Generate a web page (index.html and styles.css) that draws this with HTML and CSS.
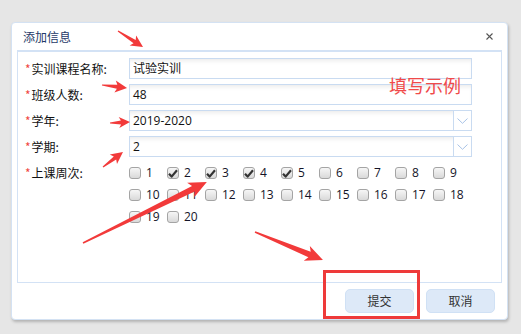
FILE: index.html
```html
<!DOCTYPE html>
<html lang="zh-CN">
<head>
<meta charset="utf-8">
<title>添加信息</title>
<link rel="stylesheet" href="styles.css">
</head>
<body>
<div class="stage">
  <div class="dialog">
    <div class="head">
      <span class="title">添加信息</span>
      <svg class="close" width="7" height="7" viewBox="0 0 7 7"><path d="M0.5 0.5L6.5 6.5M6.5 0.5L0.5 6.5" stroke="#555" stroke-width="1.1"/></svg>
    </div>
    <div class="panel">
      <div class="form">
        <div class="label"><span class="req">*</span>实训课程名称:</div>
        <div class="input"><span class="val">试验实训</span></div>
        <div class="label"><span class="req">*</span>班级人数:</div>
        <div class="input"><span class="val">48</span></div>
        <div class="label"><span class="req">*</span>学年:</div>
        <div class="input select"><span class="val">2019-2020</span><span class="drop"><svg width="11" height="6" viewBox="0 0 11 6"><path d="M0.5 0.5L5.5 5.3L10.5 0.5" fill="none" stroke="#a8c3e6" stroke-width="1"/></svg></span></div>
        <div class="label"><span class="req">*</span>学期:</div>
        <div class="input select"><span class="val">2</span><span class="drop"><svg width="11" height="6" viewBox="0 0 11 6"><path d="M0.5 0.5L5.5 5.3L10.5 0.5" fill="none" stroke="#a8c3e6" stroke-width="1"/></svg></span></div>
        <div class="label top"><span class="req">*</span>上课周次:</div>
        <div class="weeks">
          <label class="wk"><span class="cb"></span><span class="num">1</span></label>
          <label class="wk"><span class="cb"><svg class="tick" width="10" height="9" viewBox="0 0 10 9"><path d="M1 4.8L3.6 7.6L9 1.2" fill="none" stroke="#333" stroke-width="2.2" stroke-linejoin="round"/></svg></span><span class="num">2</span></label>
          <label class="wk"><span class="cb"><svg class="tick" width="10" height="9" viewBox="0 0 10 9"><path d="M1 4.8L3.6 7.6L9 1.2" fill="none" stroke="#333" stroke-width="2.2" stroke-linejoin="round"/></svg></span><span class="num">3</span></label>
          <label class="wk"><span class="cb"><svg class="tick" width="10" height="9" viewBox="0 0 10 9"><path d="M1 4.8L3.6 7.6L9 1.2" fill="none" stroke="#333" stroke-width="2.2" stroke-linejoin="round"/></svg></span><span class="num">4</span></label>
          <label class="wk"><span class="cb"><svg class="tick" width="10" height="9" viewBox="0 0 10 9"><path d="M1 4.8L3.6 7.6L9 1.2" fill="none" stroke="#333" stroke-width="2.2" stroke-linejoin="round"/></svg></span><span class="num">5</span></label>
          <label class="wk"><span class="cb"></span><span class="num">6</span></label>
          <label class="wk"><span class="cb"></span><span class="num">7</span></label>
          <label class="wk"><span class="cb"></span><span class="num">8</span></label>
          <label class="wk"><span class="cb"></span><span class="num">9</span></label>
          <label class="wk"><span class="cb"></span><span class="num">10</span></label>
          <label class="wk"><span class="cb"></span><span class="num">11</span></label>
          <label class="wk"><span class="cb"></span><span class="num">12</span></label>
          <label class="wk"><span class="cb"></span><span class="num">13</span></label>
          <label class="wk"><span class="cb"></span><span class="num">14</span></label>
          <label class="wk"><span class="cb"></span><span class="num">15</span></label>
          <label class="wk"><span class="cb"></span><span class="num">16</span></label>
          <label class="wk"><span class="cb"></span><span class="num">17</span></label>
          <label class="wk"><span class="cb"></span><span class="num">18</span></label>
          <label class="wk"><span class="cb"></span><span class="num">19</span></label>
          <label class="wk"><span class="cb"></span><span class="num">20</span></label>
        </div>
      </div>
    </div>
    <div class="foot">
      <button class="btn">提交</button>
      <button class="btn">取消</button>
    </div>
  </div>

  <div class="note">填写示例</div>
  <div class="mark"></div>

  <svg class="arrows" width="521" height="334" viewBox="0 0 521 334">
    <g fill="#f23a3a">
      <polygon transform="translate(118 31) rotate(32.6)" points="0,-0.6 19.7,-2 17.7,-6 29.7,0 17.7,6 19.7,2 0,0.6"/>
      <polygon transform="translate(102 85) rotate(6.8)" points="0,-0.6 15.2,-2 13.2,-6 25.2,0 13.2,6 15.2,2 0,0.6"/>
      <polygon transform="translate(110 123) rotate(-2.9)" points="0,-0.6 11,-2 9,-5.5 20,0 9,5.5 11,2 0,0.6"/>
      <polygon transform="translate(103 167) rotate(-36.9)" points="0,-0.6 15,-2 13,-6 25,0 13,6 15,2 0,0.6"/>
      <polygon transform="translate(83 243) rotate(-26.2)" points="0,-0.8 123,-3 120,-8 138,0 120,8 123,3 0,0.8"/>
      <polygon transform="translate(255 232) rotate(22.4)" points="0,-0.8 59,-3 56,-8 73.5,0 56,8 59,3 0,0.8"/>
    </g>
  </svg>
</div>
</body>
</html>
```

FILE: styles.css
```css
html, body {
  margin: 0;
  padding: 0;
  background: #e6e6e6;
}

body {
  width: 521px;
  height: 334px;
  overflow: hidden;
  font-family: "Open Sans", "Noto Sans CJK SC", sans-serif;
  font-size: 12px;
  color: #111;
}

.stage {
  position: relative;
  width: 521px;
  height: 334px;
  padding: 22px 0 0 11px;
  box-sizing: border-box;
}

.dialog {
  width: 497px;
  height: 298px;
  box-sizing: border-box;
  background: #fff;
  border: 1px solid #d4e2f3;
  border-radius: 4px;
  box-shadow: 1px 2px 3px rgba(0, 0, 0, 0.22);
  display: flex;
  flex-direction: column;
}

.head {
  height: 27px;
  display: flex;
  align-items: center;
  justify-content: space-between;
  padding: 0 14px 0 11px;
}

.title {
  font-family: "Noto Sans CJK SC", sans-serif;
  font-size: 12px;
  line-height: 16px;
  color: #1f3a68;
}

.close {
  display: block;
}

.panel {
  margin: 0 5px;
  height: 233px;
  box-sizing: border-box;
  border: 1px solid #d3e2f5;
  border-top-width: 2px;
  padding: 6px 0 0 7px;
}

.form {
  display: grid;
  grid-template-columns: 104px 343px;
  grid-auto-rows: 21px;
  row-gap: 5px;
}

.label {
  font-family: "Noto Sans CJK SC", sans-serif;
  font-size: 12px;
  line-height: 21px;
  color: #111;
}

.label.top {
  line-height: 22px;
}

.req {
  color: #f0473f;
  margin-right: 1px;
}

.input {
  box-sizing: border-box;
  height: 21px;
  border: 1px solid #c9dbf1;
  background: #fff;
  box-shadow: inset 0 4px 4px -2px rgba(0, 0, 0, 0.08);
  display: flex;
  align-items: center;
}

.val {
  flex: 1;
  padding-left: 3px;
  font-size: 12px;
  line-height: 19px;
  color: #111;
}

.drop {
  width: 17px;
  height: 19px;
  border-left: 1px solid #c9dbf1;
  display: flex;
  align-items: center;
  justify-content: center;
  background: #fff;
}

.weeks {
  display: grid;
  grid-template-columns: repeat(9, 38px);
  grid-auto-rows: 22px;
}

.wk {
  display: flex;
  align-items: center;
  gap: 5px;
}

.cb {
  width: 12px;
  height: 12px;
  box-sizing: border-box;
  border: 1px solid #a4a4a4;
  border-radius: 3px;
  background: linear-gradient(#f6f6f6, #d9d9d9);
  display: flex;
  align-items: center;
  justify-content: center;
}

.tick {
  display: block;
}

.num {
  font-family: "Open Sans", sans-serif;
  font-size: 12px;
  line-height: 22px;
  color: #141428;
}

.foot {
  flex: 1;
  display: flex;
  justify-content: flex-end;
  align-items: flex-start;
  gap: 12px;
  padding: 6px 12px 0 0;
}

.btn {
  width: 69px;
  height: 24px;
  box-sizing: border-box;
  border: 1px solid #d0e1f5;
  border-radius: 5px;
  background: #dde9f8;
  font-family: "Noto Sans CJK SC", sans-serif;
  font-size: 12px;
  line-height: 22px;
  color: #333;
  padding: 0;
}

.note {
  position: absolute;
  left: 389px;
  top: 74px;
  font-family: "Noto Sans CJK SC", sans-serif;
  font-size: 18px;
  line-height: 22px;
  color: #f04a4a;
}

.mark {
  position: absolute;
  left: 323px;
  top: 270px;
  width: 97px;
  height: 49px;
  box-sizing: border-box;
  border: 3px solid #ee3a3a;
}

.arrows {
  position: absolute;
  left: 0;
  top: 0;
  pointer-events: none;
}
```
